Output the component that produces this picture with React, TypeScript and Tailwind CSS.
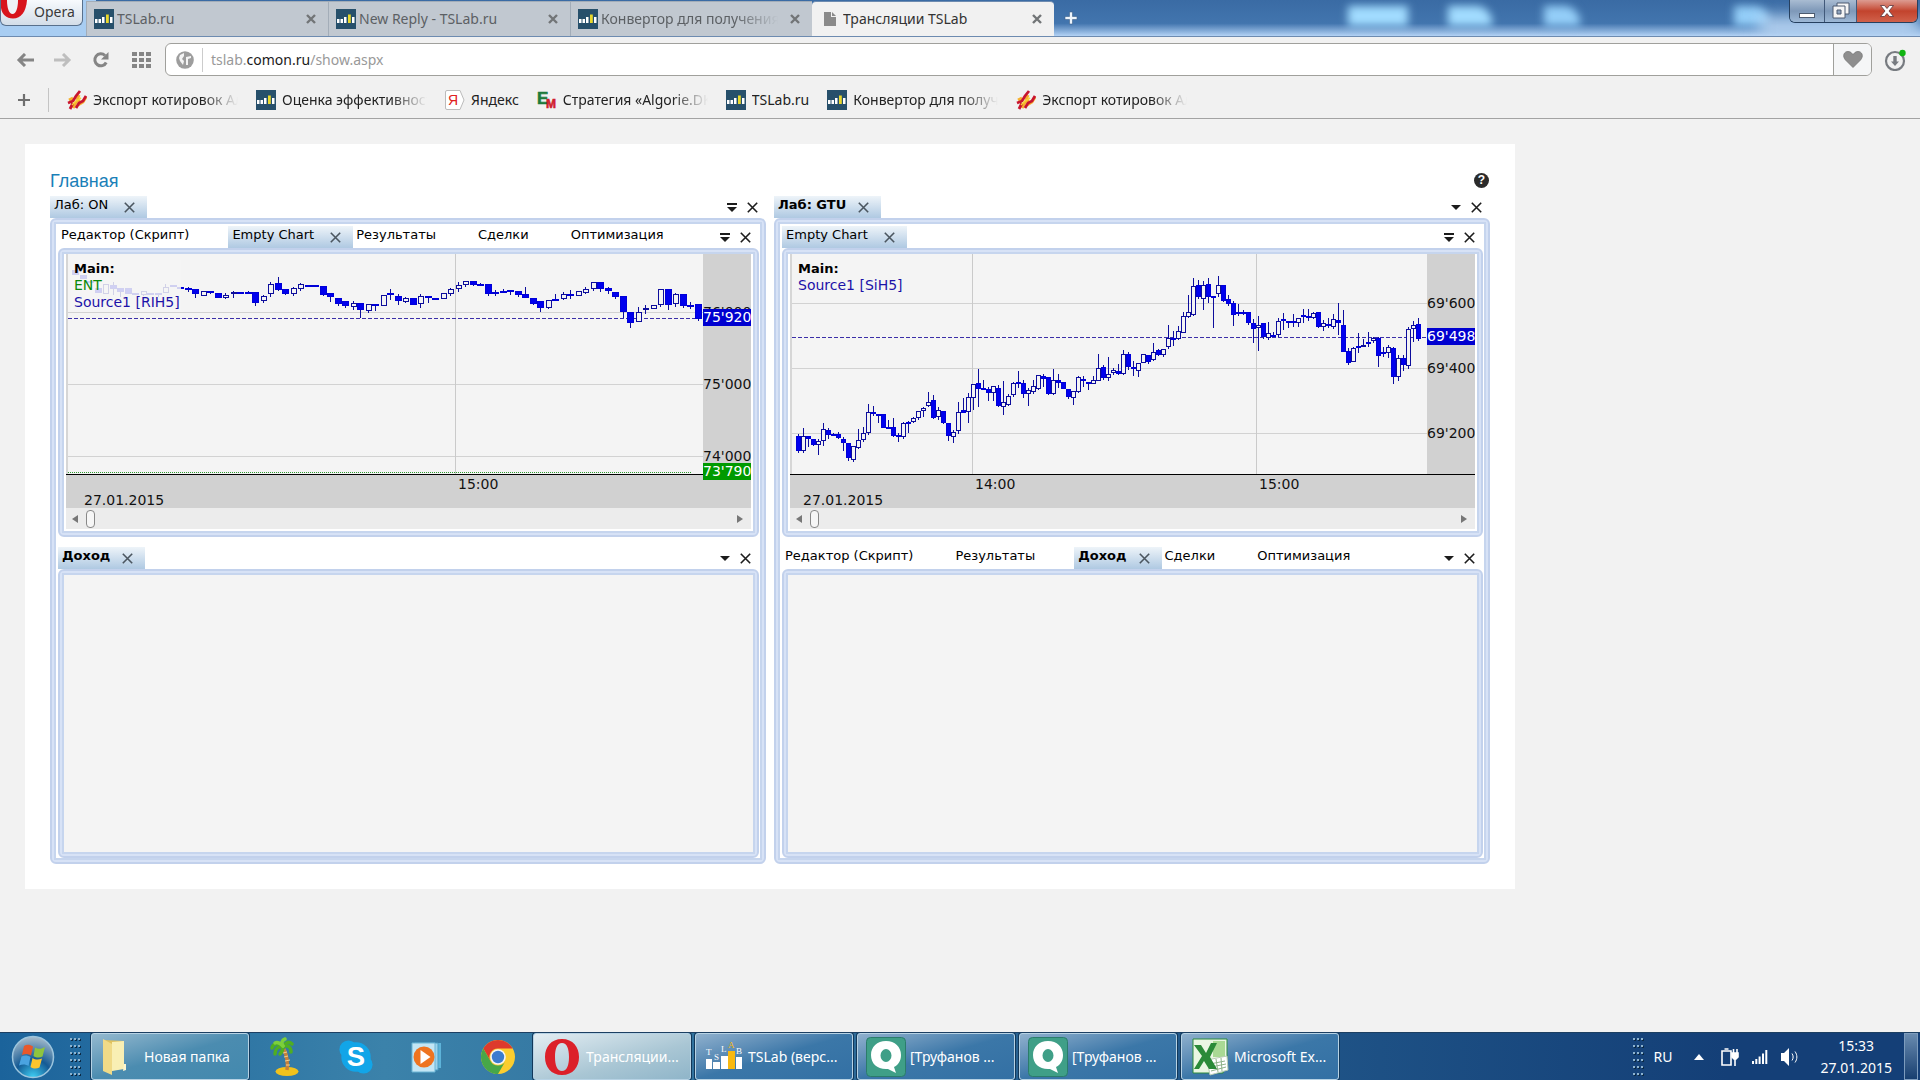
import type { ReactNode } from 'react'

// =============================================================================
// Candle data
// =============================================================================
//
// One candle per entry: body top, body bottom, wick top, wick bottom, in thirds
// of a pixel. A trailing "h" marks a rising (hollow) candle.
//
// =============================================================================

const RIH5 =
  '330,345,330,345 345,358,345,358 362,370,362,370 385,400,385,400 372,402,372,402h 375,388,365,405 385,395,385,410 385,402,385,402 400,405,400,405 392,405,392,408h 400,405,400,405 400,404,400,412 382,398,372,398h 376,382,376,382 380,384,380,384 384,388,380,396 388,403,388,415 392,408,392,408h 392,400,392,402 399,413,399,415 404,413,400,418h 396,402,394,414h 397,401,397,401 395,401,392,401 395,428,395,438 407,423,405,428h 373,403,367,411h 369,390,350,394 387,402,387,406 384,402,380,407h 373,386,369,392h 376,380,376,380 376,379,376,379 379,405,379,409 399,412,399,425 414,432,414,438 424,438,424,444 430,442,422,450h 429,450,429,474 433,454,433,458h 433,437,433,453 404,438,404,438h 399,404,388,419 408,424,402,434 414,426,410,428h 414,434,414,434 408,431,402,443h 409,412,409,430 414,417,414,417 400,418,400,418h 388,403,384,408h 375,388,365,395h 362,374,362,380h 362,376,362,378 373,377,369,377 373,402,373,407 395,399,391,409 392,400,387,400 391,394,391,406 392,406,392,411 403,415,382,415 414,432,414,436 424,443,424,457 420,443,420,447h 418,422,402,422 402,416,396,420h 402,406,390,416 394,408,394,408h 387,398,382,402h 366,386,366,394h 366,386,366,396 384,392,380,402 395,411,395,416 409,456,409,474 456,488,456,503 455,486,440,486h 443,450,436,461h 434,448,434,448h 388,434,388,440h 388,434,388,450 402,432,398,440h 403,438,403,443 434,438,425,447 433,476,433,482'

const SIH5 =
  '829,872,822,878 828,872,804,880h 828,836,828,862 836,854,836,858 843,856,836,884h 808,842,789,858h 811,825,803,838 823,827,820,828 822,834,815,838 838,850,832,874 850,895,848,903 857,899,857,907h 841,863,808,867h 820,841,800,845h 757,820,733,824h 755,759,738,768 762,765,762,790 763,803,763,803 800,805,780,805 802,828,774,832 825,830,820,847 790,832,785,837h 785,790,782,820 773,787,770,790h 753,775,753,780h 744,752,740,770h 725,738,695,742h 720,775,706,778 749,770,740,780h 752,790,752,792 788,828,788,842 815,831,810,848h 757,812,725,823h 750,758,714,758 712,756,700,790h 673,714,673,750h 669,688,628,742 685,690,660,690 688,700,680,722 677,698,677,724h 684,737,675,742 727,741,664,765h 708,734,702,738h 670,706,666,711h 665,669,634,685 669,702,660,715 690,703,684,738h 679,695,660,703h 645,688,645,690h 648,656,643,680 652,703,652,706 660,703,628,706h 660,668,643,684 666,686,666,686 686,712,686,718 692,714,692,735h 652,695,648,700h 658,664,648,682 665,672,665,690 660,673,648,673h 625,662,583,662h 622,654,614,660 642,655,590,662h 630,640,624,645h 632,642,612,645 583,643,571,646h 583,622,576,630 620,628,604,648 610,632,608,650h 583,608,583,608h 585,606,585,612 577,600,550,604h 570,586,567,588 566,586,566,590h 534,562,496,566h 535,540,512,558 514,536,497,540h 467,520,457,520h 457,470,405,474h 378,464,354,468h 376,410,360,416 374,416,362,450h 372,410,354,430 407,411,407,505 374,403,347,410h 376,424,376,426 418,432,404,437 430,464,424,498 456,462,432,467 455,460,450,466 456,490,456,494 488,508,478,550 496,505,467,573h 490,530,488,536 520,535,486,540h 526,530,515,530 482,525,475,530h 476,480,458,510 482,486,482,504 484,488,462,500 475,490,475,500h 466,470,448,490 467,472,448,482 460,474,456,478h 456,500,456,504 490,502,480,514h 493,498,474,504 478,500,462,506h 480,490,428,525 496,576,450,576 574,608,563,615 565,606,560,606h 558,564,518,580 554,562,538,562h 545,551,515,562 534,542,530,550h 534,588,530,620 575,580,562,592 562,578,556,594h 564,652,560,672 594,652,585,662h 594,614,586,633 508,618,500,628h 494,508,482,545h 493,536,473,543'

type Series = { data: string; first: number; step: number; hollowWidth: number; solidWidth: number }

function Candles({ data, first, step, hollowWidth, solidWidth }: Series) {
  return (
    <g stroke="#0d0d9c" strokeWidth="1" shapeRendering="crispEdges">
      {data.split(' ').map((row, i) => {
        const hollow = row.endsWith('h')
        const width = hollow ? hollowWidth : solidWidth
        const [top, bottom, high, low] = row
          .replace('h', '')
          .split(',')
          .map((v) => Math.round(Number(v) / 3) - 94)
        const x = Math.floor(first + i * step) + 0.5
        return (
          <g key={i}>
            <line x1={x} x2={x} y1={high} y2={low} />
            <rect
              x={x - Math.floor(width / 2)}
              y={top + 0.5}
              width={width}
              height={Math.max(bottom - top - 1, 0.5)}
              fill={hollow ? '#f4f4f4' : '#0000ee'}
              stroke={hollow ? '#0d0d9c' : '#0000d8'}
            />
          </g>
        )
      })}
    </g>
  )
}

// =============================================================================
// Chart
// =============================================================================

type Mark = { at: number; label: string }

type ChartProps = {
  series: Series
  title: string
  entry?: string
  rows: Mark[]
  columns: Mark[]
  last: Mark
  floor?: Mark
  dateX: number
}

function Chart({ series, title, entry, rows, columns, last, floor, dateX }: ChartProps) {
  return (
    <div className="px-0.5">
      <svg
        viewBox="0 0 685 254"
        preserveAspectRatio="xMaxYMin slice"
        className="block h-[254px] w-full font-['DejaVu_Sans',sans-serif] text-sm"
        fill="#111"
      >
        <rect width="685" height="254" fill="#f4f4f4" />
        <rect width="2" height="220" fill="#d6d6d6" />
        <rect x="637" width="48" height="220" fill="#d1d1d1" />
        <rect y="221" width="685" height="33" fill="#d1d1d1" />
        {rows.map((r) => (
          <rect key={r.label} x="2" y={r.at} width="635" height="1" fill="#d2d2d2" />
        ))}
        {columns.map((c) => (
          <rect key={c.label} x={c.at} width="1" height="220" fill="#cacaca" />
        ))}
        <line x1="2" x2="637" y1={last.at + 0.5} y2={last.at + 0.5} stroke="#3b2fa8" strokeDasharray="4 2" />
        <Candles {...series} />
        {entry && <rect x="5" y="6" width="110" height="50" fill="#f4f4f4" opacity="0.85" />}
        <text x="8" y="19" fontSize="13" fontWeight="bold" fill="#000">Main:</text>
        {entry && <text x="8" y="36" fill="#0a8a0a">{entry}</text>}
        <text x="8" y={entry ? 53 : 36} fill="#1c12a8">{title}</text>
        {rows.map((r) => (
          <text key={r.label} x="637" y={r.at + 5}>{r.label}</text>
        ))}
        <rect y="220" width="685" height="1" fill="#000" />
        {columns.map((c) => (
          <text key={c.label} x={c.at + 3} y="235">{c.label}</text>
        ))}
        <text x={dateX} y="251">27.01.2015</text>
        <rect x="637" y={last.at - 9} width="48" height="17" fill="#0000d0" />
        <text x="637" y={last.at + 4} fill="#fff">{last.label}</text>
        {floor && (
          <>
            <line x1="2" x2="626" y1={floor.at + 0.5} y2={floor.at + 0.5} stroke="#2f9a2f" strokeDasharray="1 1" />
            <rect x="637" y={floor.at - 9} width="48" height="17" fill="#009a00" />
            <text x="637" y={floor.at + 4} fill="#fff">{floor.label}</text>
          </>
        )}
      </svg>
      <div className="flex h-[21px] items-center justify-between bg-[#ececec] pr-2 pl-1.5">
        <button aria-label="Назад" className="border-y-4 border-r-[6px] border-y-transparent border-r-[#777]" />
        <input
          type="range"
          aria-label="Прокрутка"
          defaultValue={0}
          className="mx-2 h-[18px] min-w-0 flex-1 appearance-none bg-transparent [&::-webkit-slider-thumb]:h-[18px] [&::-webkit-slider-thumb]:w-[9px] [&::-webkit-slider-thumb]:appearance-none [&::-webkit-slider-thumb]:rounded-sm [&::-webkit-slider-thumb]:border [&::-webkit-slider-thumb]:border-[#888] [&::-webkit-slider-thumb]:bg-[#f6f6f6]"
        />
        <button aria-label="Вперёд" className="border-y-4 border-l-[6px] border-y-transparent border-l-[#777]" />
      </div>
      <div className="h-0.5 bg-white" />
    </div>
  )
}

// =============================================================================
// Dock panels
// =============================================================================

function Cross({ className }: { className: string }) {
  return (
    <svg viewBox="0 0 11 11" className={className} fill="none" stroke="currentColor" strokeWidth="1.6">
      <path d="M.8.8l9.4 9.4M10.2.8L.8 10.2" />
    </svg>
  )
}

type DockProps = { tabs: string[]; active: string; bold?: boolean; pinned?: boolean; tall?: boolean }

function DockTabs({ tabs, active, bold, pinned, tall }: DockProps) {
  return (
    <div className={`flex items-end justify-between ${tall ? 'h-6' : 'h-[22px]'}`}>
      <div className="flex min-w-0 overflow-hidden">
        {tabs.map((tab) => {
          const on = tab === active
          return (
            <div
              key={tab}
              className={`flex h-[22px] shrink-0 items-center ${
                on ? 'bg-linear-to-b from-[#eef4f9] to-[#afc9e2] pl-1' : 'pl-[3px]'
              }`}
            >
              <button className={`-mt-1 whitespace-nowrap text-[13px] leading-4 ${on && bold ? 'font-bold' : ''}`}>
                {tab}
              </button>
              {on ? (
                <button
                  aria-label="Закрыть вкладку"
                  className={`pr-3 text-[#4b5660] ${bold ? 'pl-3' : 'pl-4'}`}
                >
                  <Cross className="size-[11px]" />
                </button>
              ) : (
                <span className="w-[39px]" />
              )}
            </div>
          )
        })}
      </div>
      <div className="flex h-[22px] shrink-0 items-center gap-2.5 pr-2 text-[#1c1c1c]">
        <button aria-label="Список вкладок">
          <svg viewBox="0 0 10 9" className="h-[9px] w-2.5" fill="currentColor">
            {pinned && <path d="M0 0h10v2H0z" />}
            <path d={pinned ? 'M0 4h10L5 9z' : 'M0 2h10L5 7z'} />
          </svg>
        </button>
        <button aria-label="Закрыть">
          <Cross className="size-[11px]" />
        </button>
      </div>
    </div>
  )
}

function Frame({ children, className = '' }: { children?: ReactNode; className?: string }) {
  return (
    <div className="rounded-md border-2 border-[#c2d1ec] bg-[#d7e2f6] p-0.5">
      <div className={`border-2 border-[#c6d5ee] ${className}`}>{children}</div>
    </div>
  )
}

type LabProps = {
  name: string
  bold?: boolean
  pinned?: boolean
  upper: string[]
  lower: string[]
  chart: ChartProps
}

function Lab({ name, bold, pinned, upper, lower, chart }: LabProps) {
  return (
    <section className="min-w-0">
      <DockTabs tabs={[name]} active={name} bold={bold} pinned={pinned} />
      <Frame className="bg-white pl-0.5 pr-px">
        <DockTabs tabs={upper} active="Empty Chart" pinned tall />
        <Frame className="bg-white">
          <Chart {...chart} />
        </Frame>
        <div className="mt-2.5">
          <DockTabs tabs={lower} active="Доход" bold />
        </div>
        <Frame className="h-[281px] bg-[#f4f4f4]" />
      </Frame>
    </section>
  )
}

// =============================================================================
// Browser chrome
// =============================================================================

function LabIcon() {
  return (
    <svg viewBox="0 0 20 20" className="size-5 shrink-0">
      <path fill="#27506b" d="M0 0h20v20H0z" />
      <path fill="#fff" d="M1 10h2.500v4H1zM4.500 10h2.500v4H4.500zM8 8h2.500v6H8zM16 8h2.500v6H16z" />
      <path fill="#e9d92c" d="M12 5.500h2.800V14H12z" />
    </svg>
  )
}

function ExportIcon() {
  return (
    <svg viewBox="0 0 20 20" className="size-5 shrink-0" fill="none">
      <path stroke="#f7b02c" strokeWidth="3" d="M2 10l4-2M6 18l3-6 4-2M12 5l-2 5M11 15l5-3 3-5" />
      <path stroke="#c8152f" strokeWidth="2.800" d="M1 13l5-2 3-5 4-5M3 19l3-6M9 18l3-5 4-2 3-5" />
      <path stroke="#f6d23a" strokeWidth="1.500" d="M5 15l4-4 5-3" />
    </svg>
  )
}

function YandexIcon() {
  return (
    <svg viewBox="0 0 20 20" className="size-5 shrink-0">
      <path d="M2 .5h13l4 9.500-4 9.500H2A1.500 1.500 0 01.5 18V2A1.500 1.500 0 012 .5z" fill="#fff" stroke="#bbb" />
      <text x="3" y="15" fill="#e02020" className="font-['Liberation_Sans',sans-serif] text-[14px]">Я</text>
    </svg>
  )
}

function EmIcon() {
  return (
    <svg viewBox="0 0 20 20" className="size-5 shrink-0 font-['Liberation_Sans',sans-serif] font-bold">
      <text x="0" y="14" fill="#1d7a3c" stroke="#1d7a3c" strokeWidth=".6" fontSize="17">E</text>
      <text x="9" y="18" fill="#d0202c" stroke="#d0202c" strokeWidth=".6" fontSize="12">M</text>
    </svg>
  )
}

const pages = ['TSLab.ru', 'New Reply - TSLab.ru', 'Конвертор для получения']

const bookmarks = [
  { label: 'Экспорт котировок Альфа', icon: <ExportIcon /> },
  { label: 'Оценка эффективности', icon: <LabIcon /> },
  { label: 'Яндекс', icon: <YandexIcon /> },
  { label: 'Стратегия «Algorie.DK»', icon: <EmIcon /> },
  { label: 'TSLab.ru', icon: <LabIcon /> },
  { label: 'Конвертор для получ', icon: <LabIcon /> },
  { label: 'Экспорт котировок Альфа', icon: <ExportIcon /> },
]

const fade = 'mask-[linear-gradient(to_right,#000_75%,transparent)]'

function TabClose() {
  return (
    <button aria-label="Закрыть" className="ml-2 text-[#727577]">
      <svg viewBox="0 0 10 10" className="size-2.5" stroke="currentColor" strokeWidth="2.4">
        <path d="M1 1l8 8M9 1L1 9" />
      </svg>
    </button>
  )
}

function TitleBar() {
  return (
    <header className="relative flex h-[37px] overflow-hidden border-b border-[#6d8bb0] bg-linear-to-b from-[#3a6ba4] via-[#4275ae] via-65% to-[#b4d3f5]">
      <span className="absolute left-0 h-9 w-24 bg-[#a8cdf2]" />
      <span className="absolute top-1.5 right-[512px] h-5 w-[60px] bg-[#a2dcff] blur-[4px]" />
      <span className="absolute top-1.5 right-[428px] h-5 w-11 rounded-tr-2xl bg-[#a2dcff] blur-[4px]" />
      <span className="absolute top-1.5 right-[340px] h-5 w-9 rounded-tr-2xl bg-[#94cef8] blur-[4px]" />
      <span className="absolute top-1.5 right-[150px] h-5 w-9 rounded-tr-2xl bg-[#94cef8] blur-[4px]" />
      <span className="absolute right-0 bottom-0 h-5 w-40 bg-[#b9d5f3] blur-[8px]" />

      <button className="relative h-[26px] w-[83px] shrink-0 overflow-hidden rounded-b-md border border-t-0 border-[#58708c] bg-linear-to-b from-[#f7fafd] to-[#d3dde8] pb-0.5 pl-[33px] text-left text-sm leading-6 text-[#3a3a3a]">
        <svg viewBox="0 0 26 20" className="absolute top-0 left-0 h-5 w-[26px]">
          <path fill="#d8141c" d="M0 0h26C25 12 20 18.500 12 18.500 5 18.500 1 14 0 8z" />
          <path fill="#eef2f6" d="M6 0h11c0 8-2 14-5.500 14S6 8 6 0z" />
        </svg>
        Opera
      </button>
      <nav className="relative ml-[3px] flex min-w-0 items-end text-sm">
        {pages.map((page) => (
          <div
            key={page}
            className="flex h-[35px] w-[242px] min-w-0 items-center border-t border-l border-[#a3adb8] bg-[#c1c8d0] pr-3 pl-[7px]"
          >
            <LabIcon />
            <a href="#" className={`mr-1 ml-[3px] flex-1 overflow-hidden whitespace-nowrap text-[#5c6064] ${page.length > 20 ? fade : ''}`}>
              {page}
            </a>
            <TabClose />
          </div>
        ))}
        <div className="flex h-[35px] w-[242px] min-w-0 items-center rounded-t border-t border-[#6d8bb0] bg-[#f1f1f1] pr-3 pl-3">
          <svg viewBox="0 0 12 14" className="h-3.5 w-3 shrink-0" fill="#8a8a8a">
            <path d="M0 0h7v5h5v9H0zM8 0l4 4H8z" />
          </svg>
          <a href="#" className="ml-[7px] flex-1 overflow-hidden whitespace-nowrap text-[#333]">Трансляции TSLab</a>
          <TabClose />
        </div>
      </nav>
      <button aria-label="Новая вкладка" className="relative ml-2.5 size-[14px] self-center">
        <svg viewBox="0 0 14 14" className="size-[14px]" fill="#eef5fc" stroke="#3d5f88" strokeWidth=".6">
          <path d="M5.500 1h3v4.500H13v3H8.500V13h-3V8.500H1v-3h4.500z" />
        </svg>
      </button>
      <div className="relative mr-0.5 ml-auto flex h-[23px] shrink-0 overflow-hidden rounded-b-md border border-t-0 border-[#26405f]">
        <button aria-label="Свернуть" className="flex w-[35px] items-end justify-center border-r border-[#41597a] bg-linear-to-b from-[#a9bcd2] via-[#7e98b8] to-[#9db8d6] pb-1">
          <span className="h-[5px] w-4 border border-[#4c5b70] bg-white" />
        </button>
        <button aria-label="Развернуть" className="flex w-8 items-center justify-center border-r border-[#41597a] bg-linear-to-b from-[#a9bcd2] via-[#7e98b8] to-[#9db8d6]">
          <svg viewBox="0 0 18 18" className="size-[18px]" fill="#f5f5f5" stroke="#4c5b70">
            <path d="M5 1h12v11H5z" />
            <path d="M1 4h12v12H1z" />
            <path d="M5 8h4v4H5z" fill="#8fa4be" />
          </svg>
        </button>
        <button aria-label="Закрыть окно" className="flex w-[60px] items-center justify-center bg-linear-to-b from-[#dc9b91] via-[#c2432d] to-[#d0604a]">
          <svg viewBox="0 0 14 12" className="h-3 w-3.5" fill="#fff" stroke="#58343a" strokeWidth=".8">
            <path d="M.5.5h4L7 3.500 9.500.5h4L9 6l4.500 5.500h-4L7 8.500l-2.500 3h-4L5 6z" />
          </svg>
        </button>
      </div>
    </header>
  )
}

function Toolbar() {
  return (
    <div className="flex h-[45px] items-center bg-[#f1f1f1] pr-3.5 pl-4 text-[#858585]">
      <button aria-label="Назад">
        <svg viewBox="0 0 18 14" className="h-3.5 w-[18px]" fill="none" stroke="currentColor" strokeWidth="3">
          <path d="M18 7H3M9 1L3 7l6 6" />
        </svg>
      </button>
      <button aria-label="Вперёд" className="ml-5 text-[#bebebe]">
        <svg viewBox="0 0 18 14" className="h-3.5 w-[18px]" fill="none" stroke="currentColor" strokeWidth="3">
          <path d="M0 7h15M9 1l6 6-6 6" />
        </svg>
      </button>
      <button aria-label="Обновить" className="ml-5">
        <svg viewBox="0 0 18 18" className="size-[18px]" fill="none" stroke="currentColor" strokeWidth="3">
          <path d="M13 4.500A6 6 0 1014.200 11.500" />
          <path d="M16.500 1v7.500H9z" fill="currentColor" stroke="none" />
        </svg>
      </button>
      <button aria-label="Экспресс-панель" className="ml-[22px] grid grid-cols-3 gap-0.5">
        {Array.from({ length: 9 }, (_, i) => (
          <span key={i} className="h-1 w-[5px] bg-current" />
        ))}
      </button>
      <div className="ml-3.5 flex h-[33px] flex-1 items-center overflow-hidden rounded-md border border-[#a0a09c] bg-white">
        <svg viewBox="0 0 18 18" className="ml-2.5 size-[18px] shrink-0">
          <circle cx="9" cy="9" r="8.800" fill="#9d9d9d" />
          <path fill="#f4f4f4" d="M4 4l4-2v3L6 8l2 2-1 4-3-4-1-3zM10 6l5-1v2l-3 1v6h-2z" />
        </svg>
        <span className="mx-2 h-6 w-px bg-[#ccc]" />
        <label className="relative h-full flex-1">
          <input
            aria-label="Адрес"
            defaultValue="tslab.comon.ru/show.aspx"
            className="h-full w-full text-sm text-transparent caret-black outline-none"
          />
          <span className="pointer-events-none absolute inset-y-0 left-0 flex items-center text-sm text-[#999]">
            tslab.<span className="text-[#1a1a1a]">comon.ru</span>/show.aspx
          </span>
        </label>
        <button aria-label="В избранное" className="flex h-full w-[38px] items-center justify-center border-l border-[#a0a09c] bg-[#f5f6f7]">
          <svg viewBox="0 0 20 17" className="h-[17px] w-5" fill="#8e8e8e" stroke="#777" strokeWidth=".8">
            <path d="M10 16.500L2.500 9C-1 5 1 .5 5 .5c2.500 0 4 1.500 5 3.500 1-2 2.500-3.500 5-3.500 4 0 6 4.500 2.500 8.500z" />
          </svg>
        </button>
      </div>
      <button aria-label="Загрузки" className="ml-3">
        <svg viewBox="0 0 22 22" className="size-[22px]">
          <circle cx="11" cy="12" r="9" fill="none" stroke="#777b80" strokeWidth="2.200" />
          <path fill="#777b80" d="M9.300 7h3.400v5.500H15L11 17l-4-4.500h2.300z" />
          <circle cx="18.500" cy="4" r="3.200" fill="#11b411" />
        </svg>
      </button>
    </div>
  )
}

function Bookmarks() {
  return (
    <nav className="flex h-[37px] items-center overflow-hidden border-b border-[#a3a3a3] bg-[#f1f1f1] pl-[18px] text-sm text-[#222]">
      <button aria-label="Добавить закладку">
        <svg viewBox="0 0 12 12" className="size-3" stroke="#6f6f6f" strokeWidth="2.200">
          <path d="M6 0v12M0 6h12" />
        </svg>
      </button>
      <span className="mx-[18px] h-6 w-px shrink-0 bg-[#c4c4c4]" />
      <div className="flex gap-[18px]">
        {bookmarks.map((b, i) => (
          <a key={i} href="#" className="flex shrink-0 items-center gap-1.5">
            {b.icon}
            <span className={`max-w-[145px] overflow-hidden whitespace-nowrap ${b.label.length > 8 ? fade : ''}`}>
              {b.label}
            </span>
          </a>
        ))}
      </div>
    </nav>
  )
}

// =============================================================================
// Taskbar
// =============================================================================

function StartOrb() {
  return (
    <svg viewBox="0 0 44 44" className="size-11">
      <defs>
        <radialGradient id="orb" cx=".5" cy="1" r="1">
          <stop offset="0" stopColor="#3fd0f5" />
          <stop offset=".45" stopColor="#145a94" />
          <stop offset="1" stopColor="#a9bdcc" />
        </radialGradient>
      </defs>
      <circle cx="22" cy="22" r="20.500" fill="url(#orb)" stroke="#9cc5dd" strokeWidth="1.500" />
      <path fill="#e8582a" d="M13 11c3-2 6-1.500 9 .5l-2 9c-3-2-6-2-9-.5z" />
      <path fill="#8fc43e" d="M24 12.500c3 1.500 6 2 10-.5l-2.500 9.500c-3 1.500-6 1.500-9-.5z" />
      <path fill="#4aa3e0" d="M10.500 21.500c3-1.500 6-1.500 9 .5l-2 9c-3-2-6-2-9.500-.5z" />
      <path fill="#fbc52e" d="M21.500 23c3 2 6 2 9.500.5l-2.500 9c-3 1.500-6 1.500-9-.5z" />
    </svg>
  )
}

function Grip() {
  return (
    <div className="grid grid-cols-3 gap-x-0.5 gap-y-[5px]">
      {Array.from({ length: 18 }, (_, i) => (
        <span key={i} className="size-0.5 bg-[#8db3cf] shadow-[1px_1px_0_#0c2a45]" />
      ))}
    </div>
  )
}

function FolderIcon() {
  return (
    <svg viewBox="0 0 32 40" className="h-10 w-8">
      <path fill="#e0c25e" d="M4 3l20 1v27l-18 4z" />
      <path fill="#f9efb4" d="M12 5l12-1v28l-12 2z" />
      <path fill="#f0da87" d="M3 2l9 5v31l-9-4z" />
      <path fill="#fdf6cf" d="M24 27l2 0v6l-3 1z" />
    </svg>
  )
}

function PalmIcon() {
  return (
    <svg viewBox="0 0 32 40" className="h-10 w-8">
      <ellipse cx="18" cy="34.500" rx="11.500" ry="4.500" fill="#f2c21c" />
      <path d="M15 12c3 7 4 14 3 21" fill="none" stroke="#c8813a" strokeWidth="3.500" />
      <path d="M14 16l4-1m-3 5l4-1m-3 5l5-1m-4 5l4 0" stroke="#f2cf92" />
      <g fill="none" stroke="#4fae22" strokeWidth="3.500" strokeLinecap="round">
        <path d="M14 9C9 5 4 7 3 11" />
        <path d="M14 9c-5 0-8 3-8 8" />
        <path d="M14 9c0 4-1 6-3 8" />
        <path d="M15 9c2-4 5-5 8-2" />
        <path d="M15 9c4-1 7 1 7 6" />
        <path d="M14 9c-2-3-1-6 2-7" stroke="#7ccf3c" />
        <path d="M14 9c-3-3-6-4-8-3" stroke="#7ccf3c" />
      </g>
    </svg>
  )
}

function SkypeIcon() {
  return (
    <svg viewBox="0 0 38 38" className="size-9">
      <circle cx="19" cy="19" r="15.500" fill="#12a5e8" />
      <circle cx="11" cy="11" r="9.500" fill="#12a5e8" />
      <circle cx="27" cy="27" r="9.500" fill="#12a5e8" />
      <text x="19" y="29" textAnchor="middle" fill="#fff" className="font-['Liberation_Sans',sans-serif] text-[29px] font-bold">S</text>
    </svg>
  )
}

function PlayerIcon() {
  return (
    <svg viewBox="0 0 34 34" className="size-[34px]">
      <path fill="#5db3d9" d="M8 3h23v25H8z" />
      <path fill="#9bd3ec" stroke="#4d9dc2" d="M5 3h23v27H5z" />
      <path fill="#c3e6f5" stroke="#6ab5d5" d="M2 3h23v29H2z" />
      <circle cx="14" cy="17" r="10.500" fill="#ee7420" />
      <path fill="#fff" d="M10.500 10l10 7-10 7z" />
    </svg>
  )
}

function ChromeIcon() {
  return (
    <svg viewBox="0 0 36 36" className="size-9">
      <circle cx="18" cy="18" r="17" fill="#fccd2f" />
      <path fill="#dd3a2c" d="M3.300 9.500a17 17 0 0129.400 0H18a8.500 8.500 0 00-7.400 12.800z" />
      <path fill="#47a748" d="M3.300 9.500A17 17 0 0018 35l7.400-12.800a8.500 8.500 0 01-14.800 0z" />
      <circle cx="18" cy="18" r="7.800" fill="#f5f5f5" />
      <circle cx="18" cy="18" r="6.200" fill="#3c7ccf" />
    </svg>
  )
}

function OperaIcon() {
  return (
    <svg viewBox="0 0 36 38" className="h-[38px] w-9">
      <path
        fillRule="evenodd"
        fill="#dc2029"
        d="M18 1c11 0 17 8 17 18s-6 18-17 18S1 29 1 19 7 1 18 1zm0 4c-5 0-7 6-7 14s2 14 7 14 7-6 7-14-2-14-7-14z"
      />
    </svg>
  )
}

function BarsIcon() {
  return (
    <svg viewBox="0 0 38 32" className="h-8 w-[38px] font-['Liberation_Serif',serif] text-[9px]" fill="#fff">
      <path d="M1 18h6v10H1zM8 21h7v7H8zM16 15h7v13h-7zM31 16h6v12h-6z" />
      <path fill="#f8b911" d="M23 10h7v18h-7z" />
      <text x="1" y="14">T</text>
      <text x="9" y="19">S</text>
      <text x="16" y="11">L</text>
      <text x="23" y="7" fill="#f8b911">A</text>
      <text x="31" y="13">B</text>
    </svg>
  )
}

function QuikIcon() {
  return (
    <svg viewBox="0 0 40 40" className="size-10">
      <rect x=".5" y=".5" width="39" height="39" rx="4" fill="#3f9f87" stroke="#2b7c6b" />
      <path fill="#fff" fillRule="evenodd" d="M20 4c9 0 15 6 15 14 0 6-3 10-7 12l2 6-8-4C12 33 5 27 5 18 5 10 11 4 20 4zm0 8a5.500 6.500 0 100 13 5.500 6.500 0 000-13z" />
    </svg>
  )
}

function ExcelIcon() {
  return (
    <svg viewBox="0 0 38 38" className="size-[38px]">
      <path fill="#e9f6e2" stroke="#2c8a3c" d="M2 1h34v20l-4 14H2z" />
      <path fill="#a9d994" d="M22 3h12v16H22z" />
      <path fill="#fff" stroke="#b9cdb5" d="M16 22l20-4 1 14-18 5z" />
      <path stroke="#8fb28a" d="M19 26l15-3M20 29l15-3M20 33l15-4M25 21l2 13M30 20l1 13" />
      <path fill="#2a8a38" d="M3 7h7l5 8 5-10h6l-7 14 7 12h-8l-5-8-5 8H3l8-13z" />
    </svg>
  )
}

const windows = [
  { label: 'Трансляции...', icon: <OperaIcon />, on: true },
  { label: 'TSLab (верс...', icon: <BarsIcon /> },
  { label: '[Труфанов ...', icon: <QuikIcon /> },
  { label: '[Труфанов ...', icon: <QuikIcon /> },
  { label: 'Microsoft Ex...', icon: <ExcelIcon /> },
]

const pinned = [
  { label: 'Остров', icon: <PalmIcon /> },
  { label: 'Skype', icon: <SkypeIcon /> },
  { label: 'Проигрыватель', icon: <PlayerIcon /> },
  { label: 'Chrome', icon: <ChromeIcon /> },
]

const taskButton =
  'flex h-[47px] w-[158px] items-center rounded-[3px] border border-[#b6d2e4] text-sm whitespace-nowrap text-white shadow-[0_0_0_1px_#12385a]'

function Taskbar() {
  return (
    <footer className="sticky bottom-0 flex h-12 items-center overflow-hidden border-t border-[#1c3f62] bg-linear-to-r from-[#1b639b] via-[#3b82aa] via-20% to-[#143f77] to-90%">
      <button aria-label="Пуск" className="ml-[11px] shrink-0">
        <StartOrb />
      </button>
      <div className="ml-[15px]">
        <Grip />
      </div>
      <button className={`${taskButton} ml-[11px] shrink-0 gap-3 bg-linear-to-br from-[#94b9cf] via-[#4b8cb0] to-[#4389ae] pl-2`}>
        <FolderIcon />
        Новая папка
      </button>
      <div className="flex shrink-0">
        {pinned.map((p) => (
          <button key={p.label} aria-label={p.label} className="flex w-[71px] items-center justify-center">
            {p.icon}
          </button>
        ))}
      </div>
      <div className="flex min-w-0 gap-1">
        {windows.map((w, i) => (
          <button
            key={i}
            className={`${taskButton} gap-1 pl-2 ${
              w.on
                ? 'bg-linear-to-br from-[#e3edf2] via-[#a9c6d4] via-60% to-[#8fb5c9]'
                : 'bg-linear-to-br from-[#8fb0cd] via-[#3b77a8] to-[#3370a4]'
            }`}
          >
            <span className="flex w-10 shrink-0 justify-center">{w.icon}</span>
            {w.label}
          </button>
        ))}
      </div>
      <div className="ml-auto flex h-full shrink-0 items-center text-sm text-white">
        <Grip />
        <span className="ml-2.5">RU</span>
        <button aria-label="Скрытые значки" className="ml-[22px]">
          <svg viewBox="0 0 10 6" className="h-1.5 w-2.5" fill="#fff">
            <path d="M5 0l5 6H0z" />
          </svg>
        </button>
        <svg viewBox="0 0 20 20" className="ml-4 size-5" fill="none" stroke="#fff" strokeWidth="1.600">
          <path d="M2 4h9v14H2zM4.500 2h4" />
          <path fill="#fff" d="M12 6h6v4l-2 2h-2l-2-2zM13.500 2v4M17 2v4M15 12v7" />
        </svg>
        <svg viewBox="0 0 16 14" className="ml-3 h-3.5 w-4" fill="#fff">
          <path d="M0 11h2v3H0zM3.300 9h2v5h-2zM6.600 6.500h2V14h-2zM10 3.500h2V14h-2zM13.300 0h2v14h-2z" />
        </svg>
        <svg viewBox="0 0 20 20" className="ml-3 size-5" fill="#fff">
          <path d="M1 6h3l5-5v18l-5-5H1z" />
          <path d="M12 6.500c1.500 2 1.500 5 0 7M15 4.500c2.500 3.500 2.500 7.500 0 11" fill="none" stroke="#fff" />
        </svg>
        <div className="mr-3 ml-5 text-center leading-[22px]">
          <div>15:33</div>
          <div>27.01.2015</div>
        </div>
        <button aria-label="Показать рабочий стол" className="mr-0.5 h-full w-3.5 border border-[#7d9cbd] bg-linear-to-b from-[#6a8cb0] to-[#173f70]" />
      </div>
    </footer>
  )
}

// =============================================================================
// Page
// =============================================================================

const left: ChartProps = {
  series: { data: RIH5, first: 9.8, step: 7.5, hollowWidth: 5, solidWidth: 6 },
  title: 'Source1 [RIH5]',
  entry: 'ENT',
  rows: [
    { at: 58, label: "76'000" },
    { at: 130, label: "75'000" },
    { at: 202, label: "74'000" },
  ],
  columns: [{ at: 389, label: '15:00' }],
  last: { at: 64, label: "75'920" },
  floor: { at: 218, label: "73'790" },
  dateX: 18,
}

const right: ChartProps = {
  series: { data: SIH5, first: 8.4, step: 5, hollowWidth: 4, solidWidth: 4 },
  title: 'Source1 [SiH5]',
  rows: [
    { at: 49, label: "69'600" },
    { at: 114, label: "69'400" },
    { at: 179, label: "69'200" },
  ],
  columns: [
    { at: 182, label: '14:00' },
    { at: 466, label: '15:00' },
  ],
  last: { at: 83, label: "69'498" },
  dateX: 13,
}

export default function App() {
  return (
    <div className="flex min-h-screen flex-col bg-[#f2f2f2] font-['Noto_Sans','Open_Sans',sans-serif]">
      <TitleBar />
      <Toolbar />
      <Bookmarks />
      <main className="flex-1 px-[25px] py-[25px]">
        <div className="max-w-[1490px] bg-white px-[25px] pb-[25px]">
          <div className="flex h-[52px] items-end justify-between pr-px pb-[5px] font-['Liberation_Sans',sans-serif]">
            <a href="#" className="text-lg leading-5 text-[#1a80b8]">Главная</a>
            <button aria-label="Справка" className="mb-[3px] size-[15px] rounded-full bg-[#2b2b2b] text-xs leading-[15px] font-bold text-white">
              ?
            </button>
          </div>
          <div className="grid grid-cols-2 gap-2 font-['DejaVu_Sans',sans-serif] text-black">
            <Lab
              name="Лаб: ON"
              pinned
              upper={['Редактор (Скрипт)', 'Empty Chart', 'Результаты', 'Сделки', 'Оптимизация']}
              lower={['Доход']}
              chart={left}
            />
            <Lab
              name="Лаб: GTU"
              bold
              upper={['Empty Chart']}
              lower={['Редактор (Скрипт)', 'Результаты', 'Доход', 'Сделки', 'Оптимизация']}
              chart={right}
            />
          </div>
        </div>
      </main>
      <Taskbar />
    </div>
  )
}
